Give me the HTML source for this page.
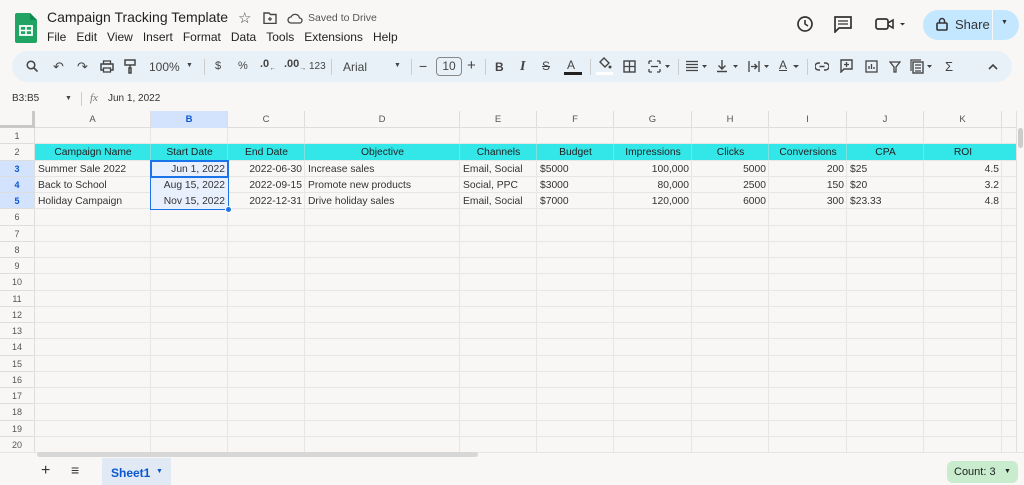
<!DOCTYPE html><html><head><meta charset="utf-8"><style>
*{margin:0;padding:0;box-sizing:border-box}
body{width:1024px;height:485px;overflow:hidden;background:#f9f7f6;font-family:"Liberation Sans",Arial,sans-serif;position:relative;color:#444}
.a{position:absolute;white-space:nowrap}
.tb{font-size:12px;color:#444}
.g{position:absolute;left:0;top:111px;width:1016px;height:341px;overflow:hidden}
.c{position:absolute;font-size:10.3px;color:#333;line-height:17px;padding:0 3px;white-space:nowrap;overflow:hidden}
</style></head><body>
<svg class="a" style="left:15px;top:13px" width="22" height="30" viewBox="0 0 22 30"><path d="M2 0h13l7 7v21a2 2 0 0 1-2 2H2a2 2 0 0 1-2-2V2a2 2 0 0 1 2-2z" fill="#1fa463"/><path d="M15 0l7 7h-7z" fill="#0f8a4f"/><rect x="5" y="13" width="12" height="9" fill="none" stroke="#fff" stroke-width="1.8"/><path d="M5 17.5h12M11 13v9" stroke="#fff" stroke-width="1.6"/></svg>
<div class="a" style="left:47px;top:9px;font-size:14px;color:#222">Campaign Tracking Template</div>
<div class="a" style="left:238px;top:9px;font-size:15px;color:#444">☆</div>
<svg class="a" style="left:263px;top:12px" width="14" height="12"><path d="M1 1h5l1.5 1.5H13v9H1z" fill="none" stroke="#444" stroke-width="1.4"/><path d="M5 7h4M7 5v4" stroke="#444" stroke-width="1.2"/></svg>
<svg class="a" style="left:287px;top:12px" width="16" height="12"><path d="M4 11a3 3 0 0 1 0-6 4.5 4.5 0 0 1 8.5 1 2.5 2.5 0 0 1 0 5z" fill="none" stroke="#444" stroke-width="1.3"/></svg>
<div class="a" style="left:308px;top:12px;font-size:10.5px;color:#555">Saved to Drive</div>
<div class="a" style="left:47px;top:30px;font-size:12px;color:#222"><span style="margin-right:10px">File</span><span style="margin-right:10px">Edit</span><span style="margin-right:10px">View</span><span style="margin-right:10px">Insert</span><span style="margin-right:10px">Format</span><span style="margin-right:10px">Data</span><span style="margin-right:10px">Tools</span><span style="margin-right:10px">Extensions</span><span>Help</span></div>
<svg class="a" style="left:796px;top:15px" width="18" height="18"><circle cx="9" cy="9" r="7" fill="none" stroke="#333" stroke-width="1.7"/><path d="M9 5v4l3 2" stroke="#333" stroke-width="1.6" fill="none"/></svg>
<svg class="a" style="left:834px;top:16px" width="18" height="17"><path d="M1 1h16v11H5l-4 4z" fill="none" stroke="#333" stroke-width="1.7"/><path d="M4 5h10M4 8h10" stroke="#333" stroke-width="1.3"/></svg>
<svg class="a" style="left:875px;top:17px" width="30" height="14"><rect x="1" y="2" width="12" height="10" rx="2" fill="none" stroke="#333" stroke-width="1.7"/><path d="M13 6l5-3v8l-5-3" fill="none" stroke="#333" stroke-width="1.6"/><path d="M25 6l2.5 2.5L30 6z" fill="#333"/></svg>
<div class="a" style="left:923px;top:10px;width:96px;height:30px;border-radius:15px;background:#c2e7ff"></div>
<div class="a" style="left:992px;top:10px;width:1px;height:30px;background:#f9f7f6"></div>
<svg class="a" style="left:936px;top:17px" width="12" height="14"><rect x="1" y="6" width="10" height="7" rx="1" fill="none" stroke="#333" stroke-width="1.6"/><path d="M3.5 6V4a2.5 2.5 0 0 1 5 0v2" fill="none" stroke="#333" stroke-width="1.5"/></svg>
<div class="a" style="left:955px;top:17px;font-size:13px;color:#333">Share</div>
<div class="a" style="left:1001px;top:19px;font-size:7px;color:#333">▼</div>
<div class="a" style="left:12px;top:51px;width:1000px;height:31px;border-radius:16px;background:#e8f1f7"></div>
<svg class="a" style="left:26px;top:60px" width="12" height="12"><circle cx="5" cy="5" r="3.8" fill="none" stroke="#444" stroke-width="1.5"/><path d="M8 8l3.5 3.5" stroke="#444" stroke-width="1.6"/></svg>
<div class="a tb" style="left:53px;top:59px;font-size:13px">↶</div>
<div class="a tb" style="left:77px;top:59px;font-size:13px">↷</div>
<svg class="a" style="left:100px;top:60px" width="14" height="13"><rect x="1" y="4" width="12" height="6" fill="none" stroke="#444" stroke-width="1.5"/><rect x="3.5" y="1" width="7" height="3" fill="none" stroke="#444" stroke-width="1.3"/><rect x="3.5" y="8" width="7" height="4" fill="#e8f1f7" stroke="#444" stroke-width="1.3"/></svg>
<svg class="a" style="left:124px;top:59px" width="12" height="15"><rect x="1" y="1" width="10" height="5" fill="none" stroke="#444" stroke-width="1.5"/><path d="M6 6v3M5 9h2v5H5z" fill="none" stroke="#444" stroke-width="1.5"/></svg>
<div class="a tb" style="left:149px;top:60px">100%</div><div class="a" style="left:186px;top:62px;font-size:7px;color:#444">▼</div>
<div class="a" style="left:204px;top:59px;width:1px;height:16px;background:#ccc"></div>
<div class="a tb" style="left:215px;top:60px;font-size:11px">$</div>
<div class="a tb" style="left:238px;top:60px;font-size:11px">%</div>
<div class="a tb" style="left:260px;top:58px;font-size:11px;font-weight:bold">.0<sub style="font-size:7px">←</sub></div>
<div class="a tb" style="left:284px;top:58px;font-size:11px;font-weight:bold">.00<sub style="font-size:7px">→</sub></div>
<div class="a tb" style="left:309px;top:61px;font-size:10px">123</div>
<div class="a" style="left:331px;top:59px;width:1px;height:16px;background:#ccc"></div>
<div class="a tb" style="left:343px;top:60px">Arial</div><div class="a" style="left:394px;top:62px;font-size:7px;color:#444">▼</div>
<div class="a" style="left:411px;top:59px;width:1px;height:16px;background:#ccc"></div>
<div class="a tb" style="left:419px;top:58px;font-size:14px">−</div>
<div class="a" style="left:436px;top:57px;width:26px;height:19px;border:1px solid #888;border-radius:4px;font-size:12px;text-align:center;line-height:17px">10</div>
<div class="a tb" style="left:467px;top:57px;font-size:15px">+</div>
<div class="a" style="left:485px;top:59px;width:1px;height:16px;background:#ccc"></div>
<div class="a tb" style="left:495px;top:60px;font-weight:bold">B</div>
<div class="a tb" style="left:520px;top:59px;font-style:italic;font-family:'Liberation Serif',serif;font-size:14px;font-weight:bold">I</div>
<div class="a tb" style="left:542px;top:59px;text-decoration:line-through">S</div>
<div class="a tb" style="left:567px;top:58px">A</div><div class="a" style="left:564px;top:72px;width:18px;height:3px;background:#222"></div>
<div class="a" style="left:590px;top:59px;width:1px;height:16px;background:#ccc"></div>
<svg class="a" style="left:597px;top:57px" width="16" height="13"><path d="M3 5l4-4 5 5-4 4z" fill="none" stroke="#444" stroke-width="1.4"/><circle cx="13" cy="10" r="1.5" fill="#444"/></svg><div class="a" style="left:596px;top:72px;width:17px;height:3px;background:#fff"></div>
<svg class="a" style="left:623px;top:60px" width="13" height="13"><rect x="1" y="1" width="11" height="11" fill="none" stroke="#444" stroke-width="1.4"/><path d="M6.5 1v11M1 6.5h11" stroke="#444" stroke-width="1.3"/></svg>
<svg class="a" style="left:648px;top:60px" width="24" height="13"><path d="M1 1v3M1 9v3M12 1v3M12 9v3M3 6.5h7M1 1h3M9 1h3M1 12h3M9 12h3" stroke="#444" stroke-width="1.3" fill="none"/><path d="M17 5l2.5 3L22 5z" fill="#444"/></svg>
<div class="a" style="left:678px;top:59px;width:1px;height:16px;background:#ccc"></div>
<svg class="a" style="left:685px;top:60px" width="24" height="13"><path d="M1 1.5h12M1 4.5h12M1 7.5h12M1 10.5h12" stroke="#444" stroke-width="1.2"/><path d="M17 5l2.5 3L22 5z" fill="#444"/></svg>
<svg class="a" style="left:716px;top:59px" width="24" height="14"><path d="M6 1v9M2.5 6.5L6 10l3.5-3.5M1 12.5h10" stroke="#444" stroke-width="1.4" fill="none"/><path d="M17 6l2.5 3L22 6z" fill="#444"/></svg>
<svg class="a" style="left:748px;top:60px" width="24" height="13"><path d="M1 1v11M11 1v11M3 6.5h6M6.5 4l2.5 2.5L6.5 9" stroke="#444" stroke-width="1.3" fill="none"/><path d="M16 5l2.5 3L21 5z" fill="#444"/></svg>
<div class="a tb" style="left:779px;top:58px;text-decoration:underline">A</div><svg class="a" style="left:793px;top:65px" width="6" height="4"><path d="M0 0l3 3 3-3z" fill="#444"/></svg>
<div class="a" style="left:807px;top:59px;width:1px;height:16px;background:#ccc"></div>
<svg class="a" style="left:815px;top:62px" width="14" height="9"><path d="M5 1H3.5a3.5 3.5 0 0 0 0 7H5M9 1h1.5a3.5 3.5 0 0 1 0 7H9M4.5 4.5h5" stroke="#444" stroke-width="1.4" fill="none"/></svg>
<svg class="a" style="left:840px;top:59px" width="13" height="14"><path d="M1 1h11v9H4l-3 3z" fill="none" stroke="#444" stroke-width="1.4"/><path d="M6.5 3v5M4 5.5h5" stroke="#444" stroke-width="1.3"/></svg>
<svg class="a" style="left:865px;top:60px" width="13" height="13"><rect x="1" y="1" width="11" height="11" fill="none" stroke="#444" stroke-width="1.3"/><path d="M4 9V6M6.5 9V4M9 9V7" stroke="#444" stroke-width="1.3"/></svg>
<svg class="a" style="left:889px;top:61px" width="12" height="12"><path d="M1 1h10L7 6v5H5V6z" fill="none" stroke="#444" stroke-width="1.3"/></svg>
<svg class="a" style="left:910px;top:59px" width="28" height="15"><rect x="3" y="3" width="10" height="11" fill="none" stroke="#444" stroke-width="1.4"/><path d="M1 12V1h10M5 6h6M5 9h6M5 12h6" stroke="#444" stroke-width="1.2" fill="none"/><path d="M17 6l2.5 3L22 6z" fill="#444"/></svg>
<div class="a tb" style="left:945px;top:59px;font-size:13px">Σ</div>
<svg class="a" style="left:988px;top:63px" width="10" height="7"><path d="M1 6l4-4 4 4" stroke="#444" stroke-width="1.6" fill="none"/></svg>
<div class="a" style="left:12px;top:93px;font-size:10px;color:#333">B3:B5</div>
<div class="a" style="left:65px;top:95px;font-size:7px;color:#444">▼</div>
<div class="a" style="left:81px;top:92px;width:1px;height:14px;background:#ccc"></div>
<div class="a" style="left:90px;top:92px;font-size:11px;font-style:italic;color:#777;font-family:'Liberation Serif',serif">fx</div>
<div class="a" style="left:108px;top:93px;font-size:10px;color:#333">Jun 1, 2022</div>
<div class="g" id="g"></div>
<div class="a" style="left:1016px;top:111px;width:8px;height:341px;background:#f9f7f6;border-left:1px solid #e0e0e0"></div>
<div class="a" style="left:1018px;top:128px;width:5px;height:20px;background:#ccc;border-radius:3px"></div>
<div class="a" style="left:0;top:452px;width:1024px;height:6px;background:#f9f7f6;border-top:1px solid #e4e4e4"></div>
<div class="a" style="left:37px;top:452px;width:441px;height:5px;background:#d7d7d7;border-radius:3px"></div>
<div class="a" style="left:41px;top:462px;font-size:16px;color:#333">+</div>
<div class="a" style="left:71px;top:462px;font-size:14px;color:#333">≡</div>
<div class="a" style="left:102px;top:458px;width:69px;height:27px;background:#e1e9f4"></div>
<div class="a" style="left:111px;top:466px;font-size:12px;color:#0b57d0;font-weight:bold">Sheet1</div>
<div class="a" style="left:156px;top:468px;font-size:7px;color:#0b57d0">▼</div>
<div class="a" style="left:947px;top:461px;width:71px;height:22px;background:#c8eccd;border-radius:6px"></div>
<div class="a" style="left:954px;top:466px;font-size:11px;color:#222">Count: 3</div>
<div class="a" style="left:1004px;top:468px;font-size:7px;color:#222">▼</div>
<script>
(function(){
var g=document.getElementById('g'),h='';
var cx=[35,151,228,305,460,537,614,692,769,847,924,1002,1016];
var L='ABCDEFGHIJK';
function tp(r){return r==0?0:17+(r-1)*16.25;}
h+='<div class="c" style="left:0;top:0;width:1016px;height:17px;background:#f9f7f6;border-bottom:1px solid #ddd"></div>';
for(var c=0;c<11;c++){h+='<div class="c" style="left:'+cx[c]+'px;top:0;width:'+(cx[c+1]-cx[c])+'px;height:17px;text-align:center;font-size:9.5px;color:#555;border-right:1px solid #ddd;'+(c==1?'background:#d3e3fd;color:#0b57d0;font-weight:bold':'')+'">'+L[c]+'</div>';}
h+='<div class="c" style="left:0;top:0;width:35px;height:17px;border-right:3px solid #c8c8c8;border-bottom:3px solid #c8c8c8"></div>';
for(var r=1;r<=20;r++){var t=tp(r);h+='<div class="c" style="left:0;top:'+t+'px;width:35px;height:16.25px;line-height:16px;text-align:center;font-size:9px;color:#555;border-bottom:1px solid #ddd;border-right:1px solid #ddd;'+(r>=3&&r<=5?'background:#d3e3fd;color:#0b57d0;font-weight:bold':'')+'">'+r+'</div>';}
for(var r=1;r<=20;r++){h+='<div style="position:absolute;left:35px;top:'+(tp(r+1)-1)+'px;width:981px;height:1px;background:#e6e6e6"></div>';}
for(var c=1;c<12;c++){h+='<div style="position:absolute;left:'+(cx[c]-1)+'px;top:17px;width:1px;height:330px;background:#e6e6e6"></div>';}
h+='<div style="position:absolute;left:35px;top:'+tp(2)+'px;width:983px;height:16px;background:#33e6e8"></div>';
for(var c=1;c<11;c++){h+='<div style="position:absolute;left:'+(cx[c]-1)+'px;top:'+tp(2)+'px;width:1px;height:16px;background:#7fe0e0"></div>';}
var hd=['Campaign Name','Start Date','End Date','Objective','Channels','Budget','Impressions','Clicks','Conversions','CPA','ROI'];
for(var c=0;c<11;c++)h+='<div class="c" style="left:'+cx[c]+'px;top:'+tp(2)+'px;width:'+(cx[c+1]-cx[c])+'px;text-align:center;color:#222">'+hd[c]+'</div>';
var d=[['Summer Sale 2022','Jun 1, 2022','2022-06-30','Increase sales','Email, Social','$5000','100,000','5000','200','$25','4.5'],
['Back to School','Aug 15, 2022','2022-09-15','Promote new products','Social, PPC','$3000','80,000','2500','150','$20','3.2'],
['Holiday Campaign','Nov 15, 2022','2022-12-31','Drive holiday sales','Email, Social','$7000','120,000','6000','300','$23.33','4.8']];
var right=[0,1,1,0,0,0,1,1,1,0,1];
h+='<div style="position:absolute;left:151px;top:'+tp(3)+'px;width:77px;height:48.75px;background:#e8f0fd"></div>';
for(var r=0;r<3;r++)for(var c=0;c<11;c++)h+='<div class="c" style="left:'+cx[c]+'px;top:'+tp(r+3)+'px;width:'+(cx[c+1]-cx[c])+'px;text-align:'+(right[c]?'right':'left')+'">'+d[r][c]+'</div>';
h+='<div style="position:absolute;left:150px;top:'+(tp(3)-1)+'px;width:79px;height:50px;border:1px solid #1a73e8"></div>';
h+='<div style="position:absolute;left:150px;top:'+(tp(3)-1)+'px;width:79px;height:18px;border:2px solid #1a73e8"></div>';
h+='<div style="position:absolute;left:225px;top:'+(tp(6)-3)+'px;width:7px;height:7px;border-radius:50%;background:#1a73e8;border:1px solid #fff"></div>';
g.innerHTML=h;
})();
</script>
</body></html>
